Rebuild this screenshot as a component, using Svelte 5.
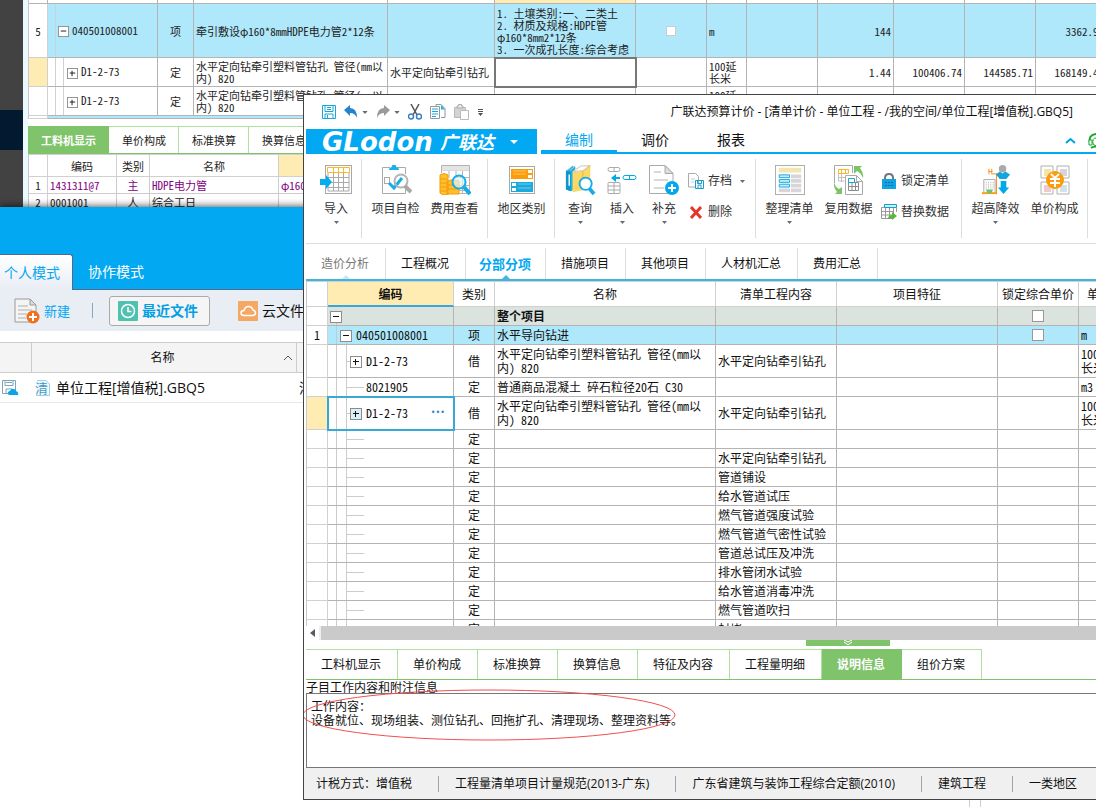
<script>
	const backRows = [
		{ code: 'D1-2-73', unit: '100延\n长米', qty: '1.44', a: '100406.74', b: '144585.71', c: '168149.43', current: true },
		{ code: 'D1-2-73', unit: '100延\n长米', qty: '', a: '', b: '', c: '', current: false }
	];
	const backTabs = ['工料机显示', '单价构成', '标准换算', '换算信息'];
	const longName = '水平定向钻牵引塑料管钻孔 管径（mm以\n内） 820';

	const rows = [
		{ level: 2, box: true, code: 'D1-2-73', kind: '借', name: longName, work: '水平定向钻牵引钻孔', unit: '100延\n长米' },
		{ level: 2, code: '8021905', kind: '定', name: '普通商品混凝土 碎石粒径20石 C30', work: '', unit: 'm3' },
		{ level: 2, box: true, code: 'D1-2-73', kind: '借', name: longName, work: '水平定向钻牵引钻孔', unit: '100延\n长米', current: true }
	];
	const works = [
		'',
		'水平定向钻牵引钻孔',
		'管道铺设',
		'给水管道试压',
		'燃气管道强度试验',
		'燃气管道气密性试验',
		'管道总试压及冲洗',
		'排水管闭水试验',
		'给水管道消毒冲洗',
		'燃气管道吹扫',
		'封堵'
	];
	for (const work of works) {
		rows.push({ level: 2, code: '', kind: '定', name: '', work, unit: '' });
	}

	const menus = ['编制', '调价', '报表'];
	const pages = ['造价分析', '工程概况', '分部分项', '措施项目', '其他项目', '人材机汇总', '费用汇总'];
	const details = ['工料机显示', '单价构成', '标准换算', '换算信息', '特征及内容', '工程量明细', '说明信息', '组价方案'];
	const statuses = ['计税方式：增值税', '工程量清单项目计量规范(2013-广东)', '广东省建筑与装饰工程综合定额(2010)', '建筑工程', '一类地区'];

	let menu = $state('编制');
	let page = $state('分部分项');
	let detail = $state('说明信息');
	let backTab = $state('工料机显示');
	let note = $state('工作内容：\n设备就位、现场组装、测位钻孔、回拖扩孔、清理现场、整理资料等。');
</script>

{#snippet caret()}
	<svg class="caret" width="7" height="4" viewBox="0 0 7 4"><path d="M0 0h7L3.5 4z" fill="#666b78" /></svg>
{/snippet}

{#snippet toggle(plus)}
	<button class="toggle" aria-label={plus ? '展开' : '折叠'}>
		<svg viewBox="0 0 12 12">
			<rect x=".5" y=".5" width="11" height="11" fill="none" stroke="#8c8c8c" />
			<path d={plus ? 'M3 5.5h6M5.5 3v6' : 'M3 5.5h6'} stroke="#111" fill="none" />
		</svg>
	</button>
{/snippet}

{#snippet big(label, art, narrow = false, drop = false)}
	<button class="big" class:narrow>
		{@render art()}
		<span>{label}</span>
		{#if drop}{@render caret()}{/if}
	</button>
{/snippet}

{#snippet importArt()}
	<svg width="32" height="30" viewBox="0 0 32 30">
		<rect x="5.5" y=".5" width="26" height="28" fill="#fff" stroke="#a9a9a9" />
		<path d="M8 8v18h21V8M8 12.500h21M8 17.500h21M8 22.500h21M13.500 7v19M18.500 7v19M23.500 7v19" fill="none" stroke="#a9a9a9" />
		<path d="M7.500 7.500v-5h22v5zM13.500 3v5M18.500 3v5M23.500 3v5" fill="none" stroke="#fbb829" />
		<path d="M0 14h6v-4l6 7-6 7v-4H0z" fill="#00adef" />
	</svg>
{/snippet}
{#snippet checkArt()}
	<svg width="32" height="30" viewBox="0 0 32 30">
		<path d="M10 2.500H2.500v26h23V22M17 2.500h8.500V9" fill="none" stroke="#a9a9a9" />
		<path d="M9 5c0-3 3-2 3-4s4-2 4 0 3 1 3 4z" fill="#19b1e8" />
		<rect x="4.500" y="12.500" width="5" height="6" fill="none" stroke="#a9a9a9" />
		<path d="M9 18l5 5 8-10" fill="none" stroke="#14aeea" stroke-width="3" />
		<circle cx="21" cy="16" r="6.500" fill="none" stroke="#b4b4b4" stroke-width="2" />
		<path d="M25 21l6 6" stroke="#a8a8a8" stroke-width="4" />
	</svg>
{/snippet}
{#snippet feeArt()}
	<svg width="32" height="30" viewBox="0 0 32 30">
		<path d="M2.500 8V.500h28v28H17M3 5h27M10 6v7M17 6v7M23.500 6v22M17 12.500h13M20 20.500h10M20 25.500h10" fill="none" stroke="#b4b4b4" />
		<path d="M3 1h27v4H3z" fill="#e4e4e4" />
		<path d="M1 10q4-3 8 0v20H4l-3-2zM8 16q6-3 12 0v13H8z" fill="#ffc02e" stroke="#f59a0b" />
		<path d="M1 14h7M1 18h7M1 22h7M1 26h7M8 20h11M8 24h11" stroke="#f59a0b" />
		<circle cx="20" cy="17" r="6.500" fill="#dff4fb" fill-opacity=".7" stroke="#16ace8" stroke-width="2" />
		<path d="M25 22l6 7" stroke="#16ace8" stroke-width="4" />
	</svg>
{/snippet}
{#snippet areaArt()}
	<svg width="30" height="30" viewBox="0 0 30 30">
		<rect x="2.500" y="1.500" width="25" height="27" fill="#fff" stroke="#a9a9a9" />
		<path d="M4 4h22v10H4z" fill="#fb9d0b" />
		<path d="M6 6h13M6 9h13" stroke="#ffc266" />
		<path d="M21 5h4v3h-4zM21 10h4v3h-4z" fill="#fff" />
		<path d="M4 17h22v10H4z" fill="#1ca9dc" />
		<path d="M11 19h13M11 23h13" stroke="#69cdf0" />
		<path d="M5 18h4v3H5zM5 23h4v3H5z" fill="#fff" />
	</svg>
{/snippet}
{#snippet queryArt()}
	<svg width="32" height="32" viewBox="0 0 32 32">
		<path d="M1 6l7-5 3 1v22l-4 4-6-2z" fill="#18b4ea" />
		<path d="M1 6l5 1v21l-5-2z" fill="#0e95cc" />
		<path d="M8 7l8-6 11-1v20l-8 7-11 2z" fill="#fcd866" />
		<path d="M19 6v20M19 6l8-5" fill="none" stroke="#e8b93c" />
		<path d="M2 6l6-5M5 6l6-5M9 7l8-6h9l-7 5z" fill="#fff" stroke="#c9c9c9" />
		<path d="M4.500 10v12" stroke="#fff" stroke-width="1.500" />
		<circle cx="22" cy="20" r="6.500" fill="#fff" stroke="#16ace8" stroke-width="2" />
		<path d="M26 25l5 6" stroke="#16ace8" stroke-width="4" />
	</svg>
{/snippet}
{#snippet insertArt()}
	<svg width="30" height="30" viewBox="0 0 30 30">
		<rect x="1" y="2.500" width="12" height="4" rx="2" fill="#fff" stroke="#aaa" />
		<path d="M7 2v5" stroke="#aaa" />
		<rect x="1" y="17.500" width="12" height="11" rx="1" fill="#fff" stroke="#aaa" />
		<path d="M1 21h12M1 25h12M7 17v12" stroke="#aaa" />
		<path d="M4 13l5-4v3h4v2H9v3z" fill="#00a9ea" />
		<rect x="16" y="10.500" width="13" height="4" rx="2" fill="#fff" stroke="#00a9ea" />
		<path d="M22.500 10v5" stroke="#00a9ea" />
	</svg>
{/snippet}
{#snippet addArt()}
	<svg width="32" height="30" viewBox="0 0 32 30">
		<path d="M1.500.500H17l8 8v20H1.500z" fill="#fff" stroke="#aaa" />
		<path d="M17 .500v8h8z" fill="#ddd" stroke="#aaa" />
		<path d="M6 7h7M6 15h14M6 23h10" stroke="#d9d9d9" stroke-width="2" />
		<circle cx="24" cy="23" r="7" fill="#00a9ea" />
		<path d="M24 19v8M20 23h8" stroke="#fff" stroke-width="2" />
	</svg>
{/snippet}
{#snippet arrangeArt()}
	<svg width="32" height="32" viewBox="0 0 32 32">
		<rect x=".5" y=".5" width="31" height="31" fill="#fff" stroke="#aaa" />
		<path d="M4 3h24v5H4z" fill="#f3e5b1" />
		<path d="M17 10h11v4H17zM17 15h11v4H17zM17 20h11v4H17zM17 25h11v4H17zM4 25h12v4H4z" fill="#d8d5da" />
		<path d="M4.500 10.500h11v3h-11zM4.500 15.500h11v3h-11zM4.500 20.500h11v3h-11z" fill="#c6ecf8" stroke="#15a9dc" />
	</svg>
{/snippet}
{#snippet reuseArt()}
	<svg width="30" height="30" viewBox="0 0 30 30">
		<path d="M.500 18V.500h18V8" fill="none" stroke="#aaa" />
		<path d="M4.500 4.500h10v4h-10zM7.500 4v5M11.500 4v5" fill="none" stroke="#fbb829" />
		<path d="M4.500 9v7h6M4 12.500h7M7.500 9v8" fill="none" stroke="#c0c0c0" />
		<path d="M11.500 10.500h11l6 6v13h-17z" fill="#fff" stroke="#aaa" />
		<path d="M22.500 10.500v6h6" fill="none" stroke="#aaa" />
		<path d="M14.500 17.500h10v8h-10zM14 21.500h11M18 17v9M21.500 17v9" fill="none" stroke="#8b8b8b" />
		<path d="M14.500 13.500h6v4h-6z" fill="none" stroke="#15a9dc" />
		<path d="M20 1h8l-2 2q4 5 3 10-2-5-6-7l-3 3zM0 16q0 5 5 8l3-2v7H1l2-2q-4-4-3-11z" fill="#7cc36a" />
	</svg>
{/snippet}
{#snippet highArt()}
	<svg width="30" height="32" viewBox="0 0 30 32">
		<path d="M2 29V15.500h12V29" fill="#fff" stroke="#a9a9a9" />
		<path d="M4.500 18v8M7 18v8M9.500 18v8M12 18v8" stroke="#aaa" stroke-dasharray="1 1" />
		<path d="M0 30h16" stroke="#fb9d0b" stroke-width="2" />
		<path d="M4 26h8l-2 4H6z" fill="#6cc27a" />
		<path d="M7.500 4v6M10.500 4v6M7 7h4M11 9.500h9M15.500 9v22" fill="none" stroke="#f08c1a" />
		<circle cx="22" cy="4" r="4" fill="#aaa" />
		<path d="M15 10l4-3 3 2 3-2 5 3-4 5h-7z" fill="#14a5df" />
		<path d="M20 17h6v7h3l-6 7-6-7h3z" fill="#00a9ea" />
	</svg>
{/snippet}
{#snippet priceArt()}
	<svg width="30" height="30" viewBox="0 0 30 30">
		<path d="M1 1h12v12H1zM17 1h12v12H17zM1 17h12v12H1zM17 17h12v12H17z" fill="#fff" stroke="#b0b0b0" />
		<path d="M4 4h7v7H4z" fill="#f3e3ae" />
		<path d="M20 4h7v7h-7z" fill="#d5d3dc" />
		<path d="M4 20h7v7H4z" fill="#efc9cb" />
		<path d="M20 20h7v7h-7z" fill="#cfe3ee" />
		<circle cx="15" cy="15" r="9" fill="#fb9d0b" />
		<path d="M11 9l4 4 4-4M15 13v9M10 14h10M10 18h10" fill="none" stroke="#fff" stroke-width="2" />
	</svg>
{/snippet}

<div class="desktop">
	<div class="back">
		<div class="rail"></div>
		<div class="back-body">
			<div class="clip">
				<table class="sheet back-sheet">
					<colgroup>
						<col class="b19" /><col class="b110" /><col class="b36" /><col class="b194" /><col class="b107" /><col class="b141" /><col class="b71" />
						<col class="b40" /><col class="b71" /><col class="b76" /><col class="b71" /><col class="b71" /><col class="b71" />
					</colgroup>
					<tbody>
						<tr class="sliver"><td></td><td></td><td></td><td></td><td></td><td class="warm"></td><td></td><td></td><td></td><td></td><td></td><td></td><td></td></tr>
						<tr class="item tall">
							<td class="no">5</td>
							<td class="tree l1">{@render toggle(false)}040501008001</td>
							<td class="mid">项</td>
							<td>牵引敷设φ160*8mmHDPE电力管2*12条</td>
							<td></td>
							<td class="pre dense">{'1. 土壤类别:一、二类土\n2. 材质及规格:HDPE管\nφ160*8mm2*12条\n3. 一次成孔长度:综合考虑'}</td>
							<td class="mid"><input type="checkbox" aria-label="锁定" /></td>
							<td>m</td>
							<td></td>
							<td class="num">144</td>
							<td></td>
							<td></td>
							<td class="num">3362.99</td>
						</tr>
						{#each backRows as row}
							<tr class="sub">
								<td class="no" class:warm={row.current}></td>
								<td class="tree l2">{@render toggle(true)}{row.code}</td>
								<td class="mid">定</td>
								<td class="pre">{longName}</td>
								<td>{row.current ? '水平定向钻牵引钻孔' : ''}</td>
								<td class:picked={row.current}></td>
								<td></td>
								<td class="pre">{row.unit}</td>
								<td></td>
								<td class="num">{row.qty}</td>
								<td class="num">{row.a}</td>
								<td class="num">{row.b}</td>
								<td class="num">{row.c}</td>
							</tr>
						{/each}
						<tr class="item thin"><td class="no"></td><td colspan="12"></td></tr>
					</tbody>
				</table>
			</div>
			<div class="green-tabs small">
				{#each backTabs as tab}
					<button class:active={tab === backTab} onclick={() => (backTab = tab)}>{tab}</button>
				{/each}
			</div>
			<table class="sheet back-parts">
				<colgroup><col class="b19" /><col class="b69" /><col class="b33" /><col class="b129" /><col /></colgroup>
				<thead>
					<tr><th></th><th>编码</th><th>类别</th><th>名称</th><th class="warm"></th></tr>
				</thead>
				<tbody>
					<tr class="purple"><td class="no">1</td><td>1431311@7</td><td class="mid">主</td><td>HDPE电力管</td><td>φ160*8mm</td></tr>
					<tr><td class="no">2</td><td>0001001</td><td class="mid">人</td><td>综合工日</td><td></td></tr>
				</tbody>
			</table>
			<div class="foot-mark"></div>
		</div>
	</div>

	<div class="launcher">
		<div class="modes">
			<button class="active">个人模式</button>
			<button>协作模式</button>
		</div>
		<div class="tools">
			<button class="create">
				<svg width="26" height="26" viewBox="0 0 26 26">
					<path d="M1 1h15l6 6v17H1z" fill="#f4f4f4" stroke="#9a9a9a" />
					<path d="M16 1v6h6z" fill="#ddd" stroke="#9a9a9a" />
					<path d="M4 8h10M4 12h14M4 16h9M4 20h8" stroke="#d2d2d2" stroke-width="2" />
					<circle cx="19" cy="19" r="6.500" fill="#f0701c" />
					<path d="M19 15v8M15 19h8" stroke="#fff" stroke-width="2" />
				</svg>
				新建
			</button>
			<i></i>
			<button class="recent">
				<svg width="20" height="20" viewBox="0 0 20 20">
					<rect width="20" height="20" rx="1" fill="#4fc1b0" />
					<circle cx="10" cy="10" r="6.500" fill="none" stroke="#fff" stroke-width="1.500" />
					<path d="M10 6v4.500h3.500" fill="none" stroke="#fff" stroke-width="1.500" />
				</svg>
				最近文件
			</button>
			<button class="cloud">
				<svg width="20" height="20" viewBox="0 0 20 20">
					<rect width="20" height="20" rx="1" fill="#f5a864" />
					<path d="M6 14.500q-3 0-3-2.500t3-2.500q1-4 4.500-4T15 9q2.500.500 2.500 3t-3 2.500z" fill="none" stroke="#fff" stroke-width="1.500" />
				</svg>
				云文件
			</button>
		</div>
		<table class="files">
			<colgroup><col class="f32" /><col class="f265" /><col /></colgroup>
			<thead>
				<tr>
					<th></th>
					<th><div class="sorter"><span>名称</span><svg width="10" height="6" viewBox="0 0 10 6"><path d="M1 5l4-4 4 4" fill="none" stroke="#555" /></svg></div></th>
					<th></th>
				</tr>
			</thead>
			<tbody>
				<tr>
					<td>
						<svg width="17" height="16" viewBox="0 0 17 16">
							<path d="M.500.500h13v13H.500zM3 .500v5h8v-5M4 13V9h6v4M4 2.500h6" fill="#fff" stroke="#7fa3b8" />
							<path d="M7 15q-2-1-1-3 1-1 2-1 1-3 4-2 1 0 2 2 3 1 2 4z" fill="#0aa4e8" />
						</svg>
					</td>
					<td>
						<div class="file">
							<svg class="kind" width="16" height="16" viewBox="0 0 16 16">
								<path d="M3 .500h9l3.500 3.500v11.500H2" fill="#eef8fd" stroke="#a4cfe2" />
								<text x="1" y="13" font-size="13" fill="#3f9cc4">清</text>
							</svg>
							单位工程[增值税].GBQ5
						</div>
					</td>
					<td>清单计价</td>
				</tr>
			</tbody>
		</table>
	</div>

	<div class="main">
		<div class="title">
			<div class="quick">
				<button aria-label="保存">
					<svg width="14" height="14" viewBox="0 0 14 14"><path d="M.500.500h13v13H.500zM3 .500v6h8v-6M3 13.500V9h8v4.500M5 2.500h4M5 4.500h4M5.500 10v3" fill="#fff" stroke="#19a6d8" /></svg>
				</button>
				<button aria-label="撤销">
					<svg width="14" height="14" viewBox="0 0 14 14"><path d="M0 5l6-5v3q7 0 7 10-2-5-7-5v3z" fill="#2384cc" /></svg>
				</button>
				{@render caret()}
				<button aria-label="重做">
					<svg width="14" height="14" viewBox="0 0 14 14"><path d="M14 5L8 0v3Q1 3 1 13q2-5 7-5v3z" fill="#9a9a9a" /></svg>
				</button>
				{@render caret()}
				<button aria-label="剪切">
					<svg width="14" height="16" viewBox="0 0 14 16">
						<path d="M3 0l6 11M11 0L5 11" stroke="#555" stroke-width="1.500" />
						<circle cx="3" cy="12.500" r="2.500" fill="none" stroke="#3c7fbe" stroke-width="1.500" /><circle cx="11" cy="12.500" r="2.500" fill="none" stroke="#3c7fbe" stroke-width="1.500" />
					</svg>
				</button>
				<button aria-label="复制">
					<svg width="16" height="16" viewBox="0 0 16 16">
						<path d="M6 2V.500h5l4 4v9h-4" fill="#fff" stroke="#8e9aa2" /><path d="M11 .500v5h4z" fill="#33aede" />
						<path d="M.500 2.500h9v12h-9z" fill="#fff" stroke="#8e9aa2" /><path d="M2 5h6M2 7.500h6M2 10h6M2 12.500h4" stroke="#1ba4dd" />
					</svg>
				</button>
				<button aria-label="粘贴">
					<svg width="16" height="16" viewBox="0 0 16 16">
						<path d="M.500 3.500h11v10H.500z" fill="#d4d4d4" stroke="#b8b8b8" /><path d="M3 4V2h1.500V.500h3V2H9v2z" fill="#eee" stroke="#aaa" />
						<path d="M6.500 6.500h8v9h-8z" fill="#fff" stroke="#bbb" />
					</svg>
				</button>
				<button aria-label="更多">
					<svg width="5" height="7" viewBox="0 0 5 7"><path d="M0 0h5v1H0zM0 2h5v1H0zM0 4h5L2.500 7z" fill="#4d4f5c" /></svg>
				</button>
			</div>
			<h1>广联达预算计价 - [清单计价 - 单位工程 - /我的空间/单位工程[增值税].GBQ5]</h1>
		</div>

		<div class="body">
			<div class="menu">
				<button class="brand">
					<b>GLodon</b><span>广联达</span>
					<svg width="8" height="4" viewBox="0 0 8 4"><path d="M0 0h8L4 4z" fill="#fff" /></svg>
				</button>
				<div class="menu-tabs">
					{#each menus as item}
						<button class:active={item === menu} onclick={() => (menu = item)}>{item}</button>
					{/each}
					<div class="menu-end">
						<svg width="11" height="7" viewBox="0 0 11 7"><path d="M1 6l4.500-4L10 6" fill="none" stroke="#00a2e2" stroke-width="2" /></svg>
						<svg width="16" height="16" viewBox="0 0 16 16">
							<path d="M2 10Q0 2 8 1q7 0 7 8" fill="none" stroke="#16a72c" stroke-width="2" />
							<path d="M1 7h3v5H1zM5 11q-1-6 3-6 5 0 3 6l-3 2z" fill="#fff" stroke="#16a72c" /><path d="M3 15q4-3 10 0" stroke="#16a72c" stroke-width="2" fill="none" />
						</svg>
					</div>
				</div>
			</div>

			<div class="ribbon">
				<div class="group first">{@render big('导入', importArt, true, true)}</div>
				<div class="group">{@render big('项目自检', checkArt)}{@render big('费用查看', feeArt)}</div>
				<div class="group">{@render big('地区类别', areaArt)}</div>
				<div class="group">
					{@render big('查询', queryArt, true, true)}{@render big('插入', insertArt, true, true)}{@render big('补充', addArt, true, true)}
					<div class="stack">
						<button>
							<svg width="16" height="16" viewBox="0 0 16 16">
								<path d="M.500.500h7l3 3V14H.500z" fill="#fff" stroke="#aaa" /><path d="M3 6h4M3 9h3" stroke="#ccc" />
								<path d="M7.500 7.500h8v8h-8zM9.500 7.500v3h4v-3M10 15v-3h3v3" fill="#fff" stroke="#159fce" />
							</svg>
							<span>存档</span>{@render caret()}
						</button>
						<button>
							<svg width="16" height="16" viewBox="0 0 16 16"><path d="M3 3l10 11M13 3L3 14" stroke="#e5352c" stroke-width="3" /></svg>
							<span>删除</span>
						</button>
					</div>
				</div>
				<div class="group">
					{@render big('整理清单', arrangeArt, false, true)}{@render big('复用数据', reuseArt)}
					<div class="stack wide">
						<button>
							<svg width="16" height="16" viewBox="0 0 16 16">
								<path d="M4 7V5q0-4 4-4t4 4v2" fill="none" stroke="#6e7480" stroke-width="2" /><path d="M1 6h14v10H1z" fill="#10a3e2" />
								<path d="M4 9.500h9M4 12.500h9" stroke="#0b6fa4" stroke-dasharray="2 1" />
							</svg>
							<span>锁定清单</span>
						</button>
						<button>
							<svg width="16" height="16" viewBox="0 0 16 16">
								<path d="M.500 3.500h12v11H.500zM0 7.500h13M0 11h13M4.500 4v10M8.500 4v10" fill="#fff" stroke="#999" />
								<path d="M3.500.500h12v3h-12z" fill="#c8effb" stroke="#179fcb" /><path d="M15.500 4v4" stroke="#999" />
								<path d="M7 15q0-4 4-4V8l5 4-5 4v-2z" fill="#54b93c" />
							</svg>
							<span>替换数据</span>
						</button>
					</div>
				</div>
				<div class="group">{@render big('超高降效', highArt, false, true)}{@render big('单价构成', priceArt)}</div>
			</div>

			<div class="pages">
				{#each pages as item, i}
					<button class:active={item === page} class:muted={i === 0} onclick={() => (page = item)}>{item}</button>
				{/each}
			</div>

			<div class="clip grid-view">
				<table class="sheet main-sheet">
					<colgroup><col class="m21" /><col class="m126" /><col class="m41" /><col class="m221" /><col class="m121" /><col class="m161" /><col class="m81" /><col class="m41" /></colgroup>
					<thead>
						<tr><th></th><th class="warm lead">编码</th><th>类别</th><th>名称</th><th>清单工程内容</th><th>项目特征</th><th>锁定综合单价</th><th>单位</th></tr>
					</thead>
					<tbody>
						<tr class="total">
							<td class="no"></td><td class="tree l0">{@render toggle(false)}</td><td></td><td><b>整个项目</b></td><td></td><td></td>
							<td class="mid"><input type="checkbox" aria-label="锁定综合单价" /></td><td></td>
						</tr>
						<tr class="item">
							<td class="no">1</td><td class="tree l1">{@render toggle(false)}040501008001</td><td class="mid">项</td><td>水平导向钻进</td><td></td><td></td>
							<td class="mid"><input type="checkbox" aria-label="锁定综合单价" /></td><td>m</td>
						</tr>
						{#each rows as row}
							<tr class:double={row.box}>
								<td class="no" class:warm={row.current}></td>
								<td class="tree {row.box ? 'l2' : 'leaf'}" class:current={row.current}>
									{#if row.box}{@render toggle(true)}{/if}{row.code}
									{#if row.current}<button class="dots" aria-label="选择">•••</button>{/if}
								</td>
								<td class="mid">{row.kind}</td>
								<td class="pre">{row.name}</td>
								<td>{row.work}</td>
								<td></td>
								<td></td>
								<td class="pre">{row.unit}</td>
							</tr>
						{/each}
					</tbody>
				</table>
			</div>
			<div class="scroll">
				<button aria-label="向左"><svg width="5" height="8" viewBox="0 0 5 8"><path d="M5 0v8L0 4z" fill="#555a66" /></svg></button>
				<div></div>
			</div>
			<div class="splitter">
				<button aria-label="收起"><svg width="10" height="5" viewBox="0 0 10 5"><path d="M1 0l4 2 4-2M1 2l4 3 4-3" fill="none" stroke="#fff" /></svg></button>
			</div>
			<div class="green-tabs">
				{#each details as item}
					<button class:active={item === detail} onclick={() => (detail = item)}>{item}</button>
				{/each}
			</div>
			<label for="note">子目工作内容和附注信息</label>
			<textarea id="note" bind:value={note} spellcheck="false"></textarea>
			<div class="status">
				{#each statuses as item}
					<span>{item}</span>
				{/each}
			</div>
			<svg class="mark" viewBox="0 0 374 52"><ellipse cx="187" cy="26" rx="186" ry="25" fill="none" stroke="#f05050" /></svg>
		</div>
	</div>
</div>

<style>
	:global(body) {
		overflow: hidden;
	}
	.desktop {
		position: relative;
		height: 100vh;
		overflow: hidden;
		background: #fff;
		color: #111;
		font: 12px/16px 'Open Sans', 'Noto Sans CJK SC', sans-serif;
	}
	button {
		margin: 0;
		padding: 0;
		border: 0;
		background: none;
		color: inherit;
		font: inherit;
		white-space: nowrap;
	}
	svg {
		flex: none;
		display: block;
	}
	.clip {
		overflow: hidden;
	}

	/* shared sheets */
	.sheet {
		width: 100%;
		table-layout: fixed;
		border-spacing: 0;
		border-top: 1px solid #d0d0d0;
		border-left: 1px solid #c8c8c8;
		font-family: 'Noto Sans CJK SC', sans-serif;
		font-feature-settings: 'hwid';
	}
	.sheet th,
	.sheet td {
		padding: 0 0 0 2px;
		border-right: 1px solid #b4b4b4;
		border-bottom: 1px solid #b4b4b4;
		text-align: left;
		font-weight: normal;
		white-space: nowrap;
		overflow: hidden;
	}
	.sheet th {
		padding: 0;
		border-color: #d0d0d0;
		text-align: center;
	}
	.sheet td.mid,
	.sheet td.no {
		padding: 0;
		text-align: center;
	}
	.sheet td.no {
		border-color: #d0d0d0;
		background: #fff;
	}
	.sheet td.num {
		padding: 0 2px 0 0;
		text-align: right;
	}
	.sheet .pre {
		white-space: pre;
	}
	.sheet .warm,
	.sheet td.no.warm {
		background: #ffecb2;
	}
	.sheet .item {
		background: #afe8fb;
	}
	.sheet input {
		appearance: none;
		display: block;
		width: 12px;
		height: 12px;
		margin: 0 auto;
		border: 1px solid #999;
		background: #fff;
	}
	.toggle {
		display: inline-block;
		width: 12px;
		height: 12px;
		vertical-align: middle;
		background: #fff;
	}

	/* background window */
	.back {
		display: flex;
		height: 100%;
		font-family: 'Noto Sans CJK SC', sans-serif;
		font-size: 11px;
		line-height: 12px;
		color: #222;
	}
	.rail {
		flex: none;
		width: 23px;
		border-right: 5px solid #ebf9ff;
		background: linear-gradient(#424242 110px, #021930 110px, #021930 150px, #424242 150px);
	}
	.back-body {
		flex: 1;
		min-width: 0;
		display: flex;
		flex-direction: column;
	}
	.back-sheet {
		min-width: 1079px;
		border-top: 0;
	}
	.back-sheet .sliver {
		height: 4px;
		line-height: 0;
	}
	.tall {
		height: 54px;
	}
	.sub {
		height: 29px;
	}
	.thin {
		height: 3px;
		line-height: 0;
	}
	.back .toggle {
		width: 11px;
		height: 11px;
		margin-right: 3px;
	}
	.back input {
		width: 10px;
		height: 10px;
		border-color: #ccc;
	}
	.back .picked {
		outline: 2px solid #777;
		outline-offset: -1px;
	}
	.back .tree.l1 {
		padding-left: 10px;
		background: linear-gradient(#c6d4d9, #c6d4d9) 7px 0 / 1px 100% no-repeat;
	}
	.back .tree.l2 {
		padding-left: 19px;
		background:
			linear-gradient(#d0d0d0, #d0d0d0) 7px 0 / 1px 100% no-repeat,
			linear-gradient(#d0d0d0, #d0d0d0) 15px 0 / 1px 100% no-repeat;
	}
	.b19 { width: 19px; }
	.b33 { width: 33px; }
	.b36 { width: 36px; }
	.b40 { width: 40px; }
	.b69 { width: 69px; }
	.b71 { width: 71px; }
	.b76 { width: 76px; }
	.b107 { width: 107px; }
	.b110 { width: 110px; }
	.b129 { width: 129px; }
	.b141 { width: 141px; }
	.b194 { width: 194px; }
	.back-parts tr {
		height: 17px;
	}
	.back-parts thead tr {
		height: 22px;
	}
	.back-parts td {
		border-color: #ccc;
	}
	.purple td:not(.no) {
		color: #800080;
	}
	.foot-mark {
		width: 10px;
		height: 8px;
		margin: auto 115px 0 auto;
		border: 1px solid #c5d0de;
		border-width: 0 1px;
	}

	/* green tabs */
	.green-tabs {
		display: flex;
		height: 30px;
		border-bottom: 1px solid #7fc36b;
	}
	.green-tabs button {
		padding: 0 16px 0 15px;
		border-top: 1px solid #b0dfa0;
		border-right: 1px solid #b0dfa0;
	}
	.green-tabs .active {
		border-color: #7fc36b;
		background: #7fc36b;
		color: #fff;
		font-weight: bold;
	}
	.green-tabs.small {
		height: 27px;
		margin-top: 7px;
	}
	.green-tabs.small button {
		padding: 0 12px 0 13px;
	}

	/* launcher */
	.launcher {
		position: absolute;
		left: 0;
		top: 207px;
		bottom: 0;
		width: 50%;
		background: #fff;
		box-shadow: 0 0 8px rgba(0, 0, 0, 0.8);
		clip-path: inset(-8px 0 0 0);
		font-size: 14px;
	}
	.modes {
		display: flex;
		align-items: flex-end;
		height: 82px;
		border-bottom: 1px solid #4c6a94;
		background: #02a8f1;
	}
	.modes button {
		height: 34px;
		padding: 0 15px;
		color: #fff;
	}
	.modes .active {
		height: 36px;
		margin-bottom: -1px;
		padding: 0 12px 0 4px;
		border: 1px solid #4c6a94;
		border-width: 1px 1px 0 0;
		border-radius: 0 3px 0 0;
		background: linear-gradient(#fff, #e9edf4);
		color: #02a8f1;
	}
	.tools {
		display: flex;
		align-items: center;
		height: 41px;
		padding-left: 14px;
		background: #e9edf4;
	}
	.tools button {
		display: flex;
		align-items: center;
		gap: 4px;
	}
	.tools .create {
		color: #02a8f1;
		font-size: 13px;
	}
	.tools i {
		width: 1px;
		height: 15px;
		margin: 0 16px 0 22px;
		background: #8fa3bd;
	}
	.tools .recent {
		height: 30px;
		padding: 0 11px 0 8px;
		border: 1px solid #aaa;
		border-radius: 3px;
		background: #f5f5f5;
		color: #02a0e4;
		font-weight: bold;
	}
	.tools .cloud {
		margin-left: 28px;
	}
	.files {
		width: 100%;
		margin-top: 11px;
		table-layout: fixed;
		border-spacing: 0;
	}
	.files th {
		height: 29px;
		padding: 0;
		border: 1px solid #ccc;
		border-left: 0;
		background: #f4f4f4;
		font-size: 12px;
		font-weight: normal;
	}
	.files td {
		height: 29px;
		padding: 0 2px;
		border-bottom: 1px solid #e8e8e8;
	}
	.f32 { width: 32px; }
	.f265 { width: 265px; }
	.sorter,
	.file {
		display: flex;
		align-items: center;
	}
	.sorter span {
		flex: 1;
	}
	.sorter svg {
		margin-right: 3px;
		margin-left: -10px;
	}
	.file {
		gap: 6px;
	}
	.kind {
		overflow: visible;
	}

	/* main window */
	.main {
		position: absolute;
		left: 303px;
		top: 94px;
		right: 0;
		bottom: 7px;
		display: flex;
		flex-direction: column;
		border: 1px solid #434343;
		border-right: 0;
		background: #fff;
		overflow: hidden;
		box-sizing: border-box;
	}
	.title {
		flex: none;
		display: flex;
		align-items: center;
		justify-content: space-between;
		height: 34px;
		padding: 0 23px 0 18px;
	}
	.quick {
		display: flex;
		align-items: center;
		gap: 8px;
	}
	.quick .caret {
		width: 6px;
		margin-left: -4px;
	}
	h1 {
		margin: 0;
		font-size: 12px;
		font-weight: normal;
		white-space: nowrap;
	}
	.body {
		position: relative;
		flex: 1;
		min-height: 0;
		display: flex;
		flex-direction: column;
		margin-left: 2px;
	}
	.menu {
		flex: none;
		display: flex;
		height: 25px;
	}
	.brand {
		display: flex;
		align-items: center;
		width: 231px;
		padding-left: 16px;
		overflow: hidden;
		background: #02a8f1;
		color: #fff;
		font-size: 18px;
		font-weight: bold;
		font-style: italic;
		line-height: 24px;
	}
	.brand b {
		width: 118px;
		text-align: left;
		font-family: 'DejaVu Sans', sans-serif;
		font-size: 26px;
	}
	.brand svg {
		margin-left: 16px;
	}
	.menu-tabs {
		flex: 1;
		display: flex;
		margin-left: 4px;
		background: linear-gradient(#02a8f1, #02a8f1) 0 100% / 100% 2px no-repeat;
	}
	.menu-tabs button {
		width: 76px;
		padding-bottom: 4px;
		font-size: 14px;
	}
	.menu-tabs .active {
		padding-bottom: 0;
		border-bottom: 4px solid #02a8f1;
		color: #02a8f1;
	}
	.menu-end {
		display: flex;
		align-items: center;
		gap: 12px;
		margin: 0 -8px 2px auto;
	}
	.ribbon {
		flex: none;
		display: flex;
		height: 79px;
		padding: 5px 0;
		border-bottom: 1px solid #ddd;
	}
	.group {
		flex: none;
		display: flex;
		padding: 0 3px 0 4px;
		border-right: 1px solid #ddd;
	}
	.group.first {
		padding: 0 4px 0 9px;
	}
	.big {
		display: flex;
		flex-direction: column;
		align-items: center;
		width: 59px;
		padding-top: 6px;
		color: #333;
	}
	.big.narrow {
		width: 42px;
	}
	.big > :global(svg:first-child) {
		height: 30px;
	}
	.big span {
		margin: 6px 0 4px;
	}
	.caret {
		width: 5px;
		height: 3px;
	}
	.stack {
		display: flex;
		flex-direction: column;
		gap: 7px;
		width: 60px;
		padding: 10px 4px 0 3px;
	}
	.stack.wide {
		width: 73px;
	}
	.stack button {
		display: flex;
		align-items: center;
		gap: 4px;
		height: 24px;
		color: #333;
	}
	.stack .caret {
		margin-left: 4px;
	}
	.pages {
		flex: none;
		display: flex;
		height: 31px;
		padding-top: 4px;
		border-bottom: 2px solid #42b4e0;
	}
	.pages button {
		position: relative;
		padding: 0 16px 0 15px;
		border-right: 1px solid #ddd;
	}
	.pages .active {
		padding: 0 14px 0 13px;
		color: #02a8f1;
		font-size: 13px;
		font-weight: bold;
	}
	.pages .muted {
		color: #777;
	}
	.pages .active::after,
	.pages .muted::after {
		content: '';
		position: absolute;
		left: 50%;
		bottom: 0;
		margin-left: -4px;
		border: 4px solid transparent;
		border-top: 0;
		border-bottom-color: #42b4e0;
	}
	.pages .muted::after {
		border-bottom-color: #c4e8f6;
	}
	.grid-view {
		flex: 1;
		min-height: 0;
	}
	.main-sheet {
		min-width: 814px;
	}
	.main-sheet tr {
		height: 19px;
		line-height: 14px;
	}
	.main-sheet thead tr {
		height: 25px;
	}
	.main-sheet tr.double {
		height: 33px;
	}
	.main-sheet .total {
		background: #dae3de;
	}
	.main-sheet .lead {
		border-bottom: 2px solid #38a9d6;
		font-weight: bold;
	}
	.m21 { width: 21px; }
	.m41 { width: 41px; }
	.m81 { width: 81px; }
	.m121 { width: 121px; }
	.m126 { width: 126px; }
	.m161 { width: 161px; }
	.m221 { width: 221px; }
	.main-sheet .toggle {
		margin-right: 4px;
	}
	.main-sheet .l0 {
		background: linear-gradient(#c8c8c8, #c8c8c8) 8px 100% / 1px 3px no-repeat;
	}
	.main-sheet .l1 {
		padding-left: 12px;
		background:
			linear-gradient(#c0ccd0, #c0ccd0) 8px 0 / 1px 100% no-repeat,
			linear-gradient(#c0ccd0, #c0ccd0) 18px 100% / 1px 3px no-repeat;
	}
	.main-sheet .l2,
	.main-sheet .leaf {
		padding-left: 22px;
		background:
			linear-gradient(#ccc, #ccc) 8px 0 / 1px 100% no-repeat,
			linear-gradient(#ccc, #ccc) 18px 0 / 1px 100% no-repeat,
			linear-gradient(#ccc, #ccc) 18px 50% / 4px 1px no-repeat;
	}
	.main-sheet .leaf {
		padding-left: 38px;
		background-size: 1px 100%, 1px 100%, 18px 1px;
	}
	.main-sheet .current {
		outline: 2px solid #38a9d6;
		outline-offset: -1px;
	}
	.main-sheet .current .toggle {
		background: #d8f1f8;
	}
	.dots {
		float: right;
		margin-right: 8px;
		color: #2f86c8;
		font: 8px/14px 'DejaVu Sans', sans-serif;
	}
	.scroll {
		flex: none;
		display: flex;
		gap: 2px;
		height: 14px;
		background: #eee;
	}
	.scroll button {
		display: flex;
		align-items: center;
		justify-content: center;
		width: 13px;
		background: #fff;
	}
	.scroll div {
		flex: 1;
		background: #cacaca;
	}
	.splitter {
		flex: none;
		height: 9px;
		padding-left: 500px;
	}
	.splitter button {
		display: flex;
		justify-content: center;
		width: 84px;
		height: 6px;
		background: #7fc36b;
	}
	.body > .green-tabs {
		flex: none;
	}
	label {
		flex: none;
		height: 13px;
		line-height: 15px;
	}
	textarea {
		flex: none;
		height: 75px;
		box-sizing: border-box;
		padding: 5px 4px;
		border: 1px solid #777;
		border-right: 0;
		border-radius: 0;
		outline: 0;
		resize: none;
		color: inherit;
		font: 12px/14px 'Noto Sans CJK SC', sans-serif;
	}
	.status {
		flex: none;
		display: flex;
		align-items: center;
		height: 31px;
		margin-left: -2px;
		background: #f0f0f0;
		white-space: nowrap;
	}
	.status span {
		padding: 0 26px 0 16px;
		border-right: 1px solid #9aa6b8;
	}
	.status span:first-child {
		padding-left: 12px;
	}
	.status span:last-child {
		border: 0;
	}
	.mark {
		position: absolute;
		left: -4px;
		bottom: 58px;
		width: 374px;
		height: 52px;
		pointer-events: none;
	}
</style>
